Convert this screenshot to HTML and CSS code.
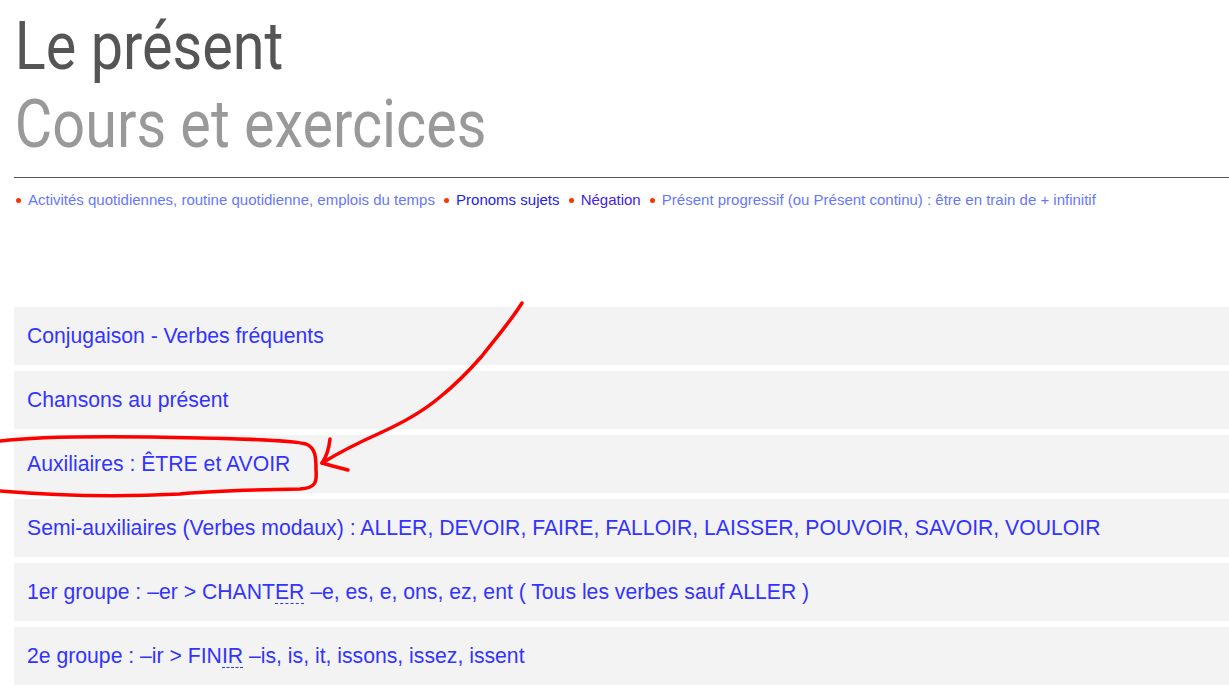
FILE: index.html
```html
<!DOCTYPE html>
<html>
<head>
    <title>Le présent - Cours et exercices</title>
    <link rel="stylesheet" href="styles.css">
</head>
<body>
    <div class="page">
        <h1 class="title">Le présent<br><span class="subtitle">Cours et exercices</span></h1>
        <hr class="rule">

        <p class="related">
            <span class="dot"></span><a class="visited" href="#">Activités quotidiennes, routine quotidienne, emplois du temps</a>
            <span class="dot"></span><a href="#">Pronoms sujets</a>
            <span class="dot"></span><a class="purple" href="#">Négation</a>
            <span class="dot"></span><a class="visited" href="#">Présent progressif (ou Présent continu) : être en train de + infinitif</a>
        </p>

        <ul class="topics">
            <li><a href="#">Conjugaison - Verbes fréquents</a></li>
            <li><a href="#">Chansons au présent</a></li>
            <li><a href="#">Auxiliaires : ÊTRE et AVOIR</a></li>
            <li><a href="#">Semi-auxiliaires (Verbes modaux) : ALLER, DEVOIR, FAIRE, FALLOIR, LAISSER, POUVOIR, SAVOIR, VOULOIR</a></li>
            <li><a href="#">1er groupe : –er &gt; CHANT<abbr>ER</abbr> –e, es, e, ons, ez, ent ( Tous les verbes sauf ALLER )</a></li>
            <li><a href="#">2e groupe : –ir &gt; FIN<abbr>IR</abbr> –is, is, it, issons, issez, issent</a></li>
        </ul>
    </div>

    <!-- hand drawn mark over the screenshot -->
    <svg class="scribble" width="560" height="210" viewBox="0 290 560 210">
        <path d="M0 441 C40 436 120 436 200 438 C250 439 290 440 306 444 C316 448 316 458 316 470 C317 482 316 488 300 489 C260 490 220 490 180 494 C120 497 60 496 0 491"
              fill="none" stroke="#ff0000" stroke-width="3.5" stroke-linecap="round" stroke-linejoin="round"/>
        <path d="M522 303 C510 322 496 338 482 356 C468 372 455 385 440 397 C420 414 400 424 380 433 C360 442 340 452 322 463"
              fill="none" stroke="#ff0000" stroke-width="3.5" stroke-linecap="round" stroke-linejoin="round"/>
        <path d="M330 439 C329 448 327 456 322 463 C332 466 340 468 348 470"
              fill="none" stroke="#ff0000" stroke-width="3.5" stroke-linecap="round" stroke-linejoin="round"/>
    </svg>
</body>
</html>
```

FILE: styles.css
```css
body {
    margin: 0;
    font-family: "Liberation Sans", Arial, sans-serif;
    background: #fff;
    overflow: hidden;
}
.page {
    padding: 0 0 0 14px;
}
.title {
    margin: 0;
    padding: 8px 0 0 1px;
    font-family: Roboto, sans-serif;
    font-weight: 400;
    font-size: 66px;
    line-height: 78px;
    color: #555;
    transform: scaleX(0.872);
    transform-origin: left top;
}
.subtitle {
    color: #999;
}
.rule {
    margin: 13px 0 0 0;
    border: 0;
    border-top: 1px solid #555;
}
.related {
    margin: 12px 0 0 0;
    font-size: 15px;
    line-height: 20px;
}
.related a {
    color: #2222ee;
    text-decoration: none;
}
.related a.visited {
    color: #6677ff;
}
.related a.purple {
    color: #4422dd;
}
.dot {
    display: inline-block;
    width: 5px;
    height: 5px;
    border-radius: 50%;
    background: #ff3300;
    margin: 0 7px 1px 5px;
    vertical-align: middle;
}
.related .dot:first-child {
    margin-left: 2px;
}
.topics {
    list-style: none;
    margin: 97px 0 0 0;
    padding: 0;
    display: flex;
    flex-direction: column;
    gap: 6px;
}
.topics li {
    background: #f3f3f3;
    padding: 0 13px;
    height: 58px;
    display: flex;
    align-items: center;
}
.topics a {
    color: #3333ff;
    font-size: 21.2px;
    text-decoration: none;
}
abbr {
    text-decoration: none;
    border-bottom: 1px dashed #3333ff;
}
.scribble {
    position: absolute;
    left: 0;
    top: 290px;
}
```
